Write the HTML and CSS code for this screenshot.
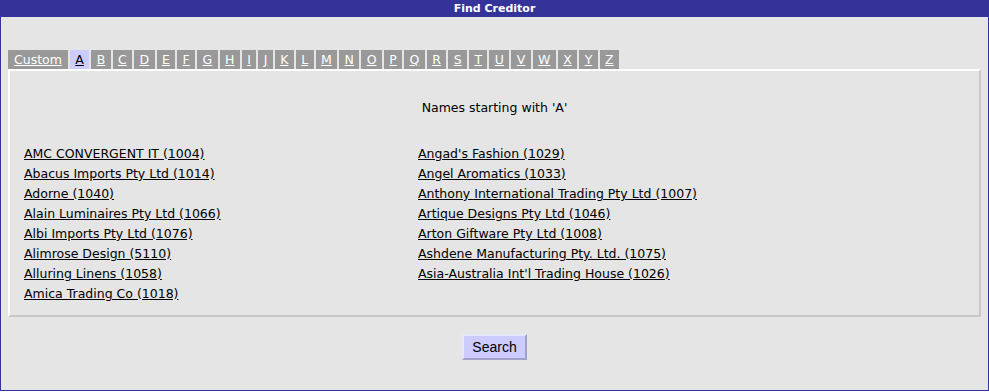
FILE: index.html
```html
<!DOCTYPE html>
<html lang="en">
<head>
    <meta charset="UTF-8">
    <title>Find Creditor</title>
    <link rel="stylesheet" href="styles.css">
</head>
<body>
<div class="frame">
    <div class="title-bar">Find Creditor</div>
    <div class="content">
        <div class="tabs">
            <a href="#" class="tab">Custom</a>
            <a href="#" class="tab active">A</a>
            <a href="#" class="tab">B</a>
            <a href="#" class="tab">C</a>
            <a href="#" class="tab">D</a>
            <a href="#" class="tab">E</a>
            <a href="#" class="tab">F</a>
            <a href="#" class="tab">G</a>
            <a href="#" class="tab">H</a>
            <a href="#" class="tab">I</a>
            <a href="#" class="tab">J</a>
            <a href="#" class="tab">K</a>
            <a href="#" class="tab">L</a>
            <a href="#" class="tab">M</a>
            <a href="#" class="tab">N</a>
            <a href="#" class="tab">O</a>
            <a href="#" class="tab">P</a>
            <a href="#" class="tab">Q</a>
            <a href="#" class="tab">R</a>
            <a href="#" class="tab">S</a>
            <a href="#" class="tab">T</a>
            <a href="#" class="tab">U</a>
            <a href="#" class="tab">V</a>
            <a href="#" class="tab">W</a>
            <a href="#" class="tab">X</a>
            <a href="#" class="tab">Y</a>
            <a href="#" class="tab">Z</a>
        </div>
        <div class="panel">
            <p class="heading">Names starting with 'A'</p>
            <div class="names">
                <ul class="column">
                    <li><a href="#">AMC CONVERGENT IT (1004)</a></li>
                    <li><a href="#">Abacus Imports Pty Ltd (1014)</a></li>
                    <li><a href="#">Adorne (1040)</a></li>
                    <li><a href="#">Alain Luminaires Pty Ltd (1066)</a></li>
                    <li><a href="#">Albi Imports Pty Ltd (1076)</a></li>
                    <li><a href="#">Alimrose Design (5110)</a></li>
                    <li><a href="#">Alluring Linens (1058)</a></li>
                    <li><a href="#">Amica Trading Co (1018)</a></li>
                </ul>
                <ul class="column">
                    <li><a href="#">Angad's Fashion (1029)</a></li>
                    <li><a href="#">Angel Aromatics (1033)</a></li>
                    <li><a href="#">Anthony International Trading Pty Ltd (1007)</a></li>
                    <li><a href="#">Artique Designs Pty Ltd (1046)</a></li>
                    <li><a href="#">Arton Giftware Pty Ltd (1008)</a></li>
                    <li><a href="#">Ashdene Manufacturing Pty. Ltd. (1075)</a></li>
                    <li><a href="#">Asia-Australia Int'l Trading House (1026)</a></li>
                </ul>
            </div>
        </div>
        <div class="actions">
            <button type="button" class="search-button">Search</button>
        </div>
    </div>
</div>
</body>
</html>
```

FILE: styles.css
```css
body {
    font-family: "DejaVu Sans", Verdana, sans-serif;
    font-size: 12.5px;
    background-color: #ffffff;
    color: #000000;
    margin: 0;
    padding: 0;
}
.frame {
    width: 987px;
    height: 390px;
    border: 1px solid #333399;
    border-top: none;
    background-color: #e5e5e5;
    display: flex;
    flex-direction: column;
}
.title-bar {
    background-color: #333399;
    color: white;
    font-weight: bold;
    font-size: 11px;
    text-align: center;
    height: 17px;
    line-height: 17px;
}
.content {
    padding: 33px 7px 0 7px;
}
.tabs {
    display: flex;
    gap: 2px;
}
.tab {
    background-color: #999999;
    color: white;
    padding: 0 5.4px;
    height: 19px;
    line-height: 19px;
}
.tab:first-child {
    padding: 0 6px;
}
.tab.active {
    background-color: #ccccff;
    color: #000000;
}
.panel {
    border-top: 2px solid #ffffff;
    border-left: 2px solid #ffffff;
    border-right: 2px solid #c8c8c8;
    border-bottom: 2px solid #c8c8c8;
    height: 244px;
}
.heading {
    text-align: center;
    margin: 29px 0 0 0;
}
.names {
    display: flex;
    margin: 29px 0 0 14px;
}
.column {
    list-style: none;
    margin: 0;
    padding: 0;
    width: 394px;
}
.column li {
    height: 20px;
    line-height: 20px;
}
.column a {
    color: #000000;
}
.actions {
    text-align: center;
    padding-top: 17px;
}
.search-button {
    font-family: "Liberation Sans", Arial, sans-serif;
    font-size: 14px;
    background-color: #ccccff;
    color: #000000;
    border: 2px solid;
    border-color: #e6e6ff #a0a0c8 #a0a0c8 #e6e6ff;
    width: 65px;
    height: 26px;
    padding: 0;
}
```
